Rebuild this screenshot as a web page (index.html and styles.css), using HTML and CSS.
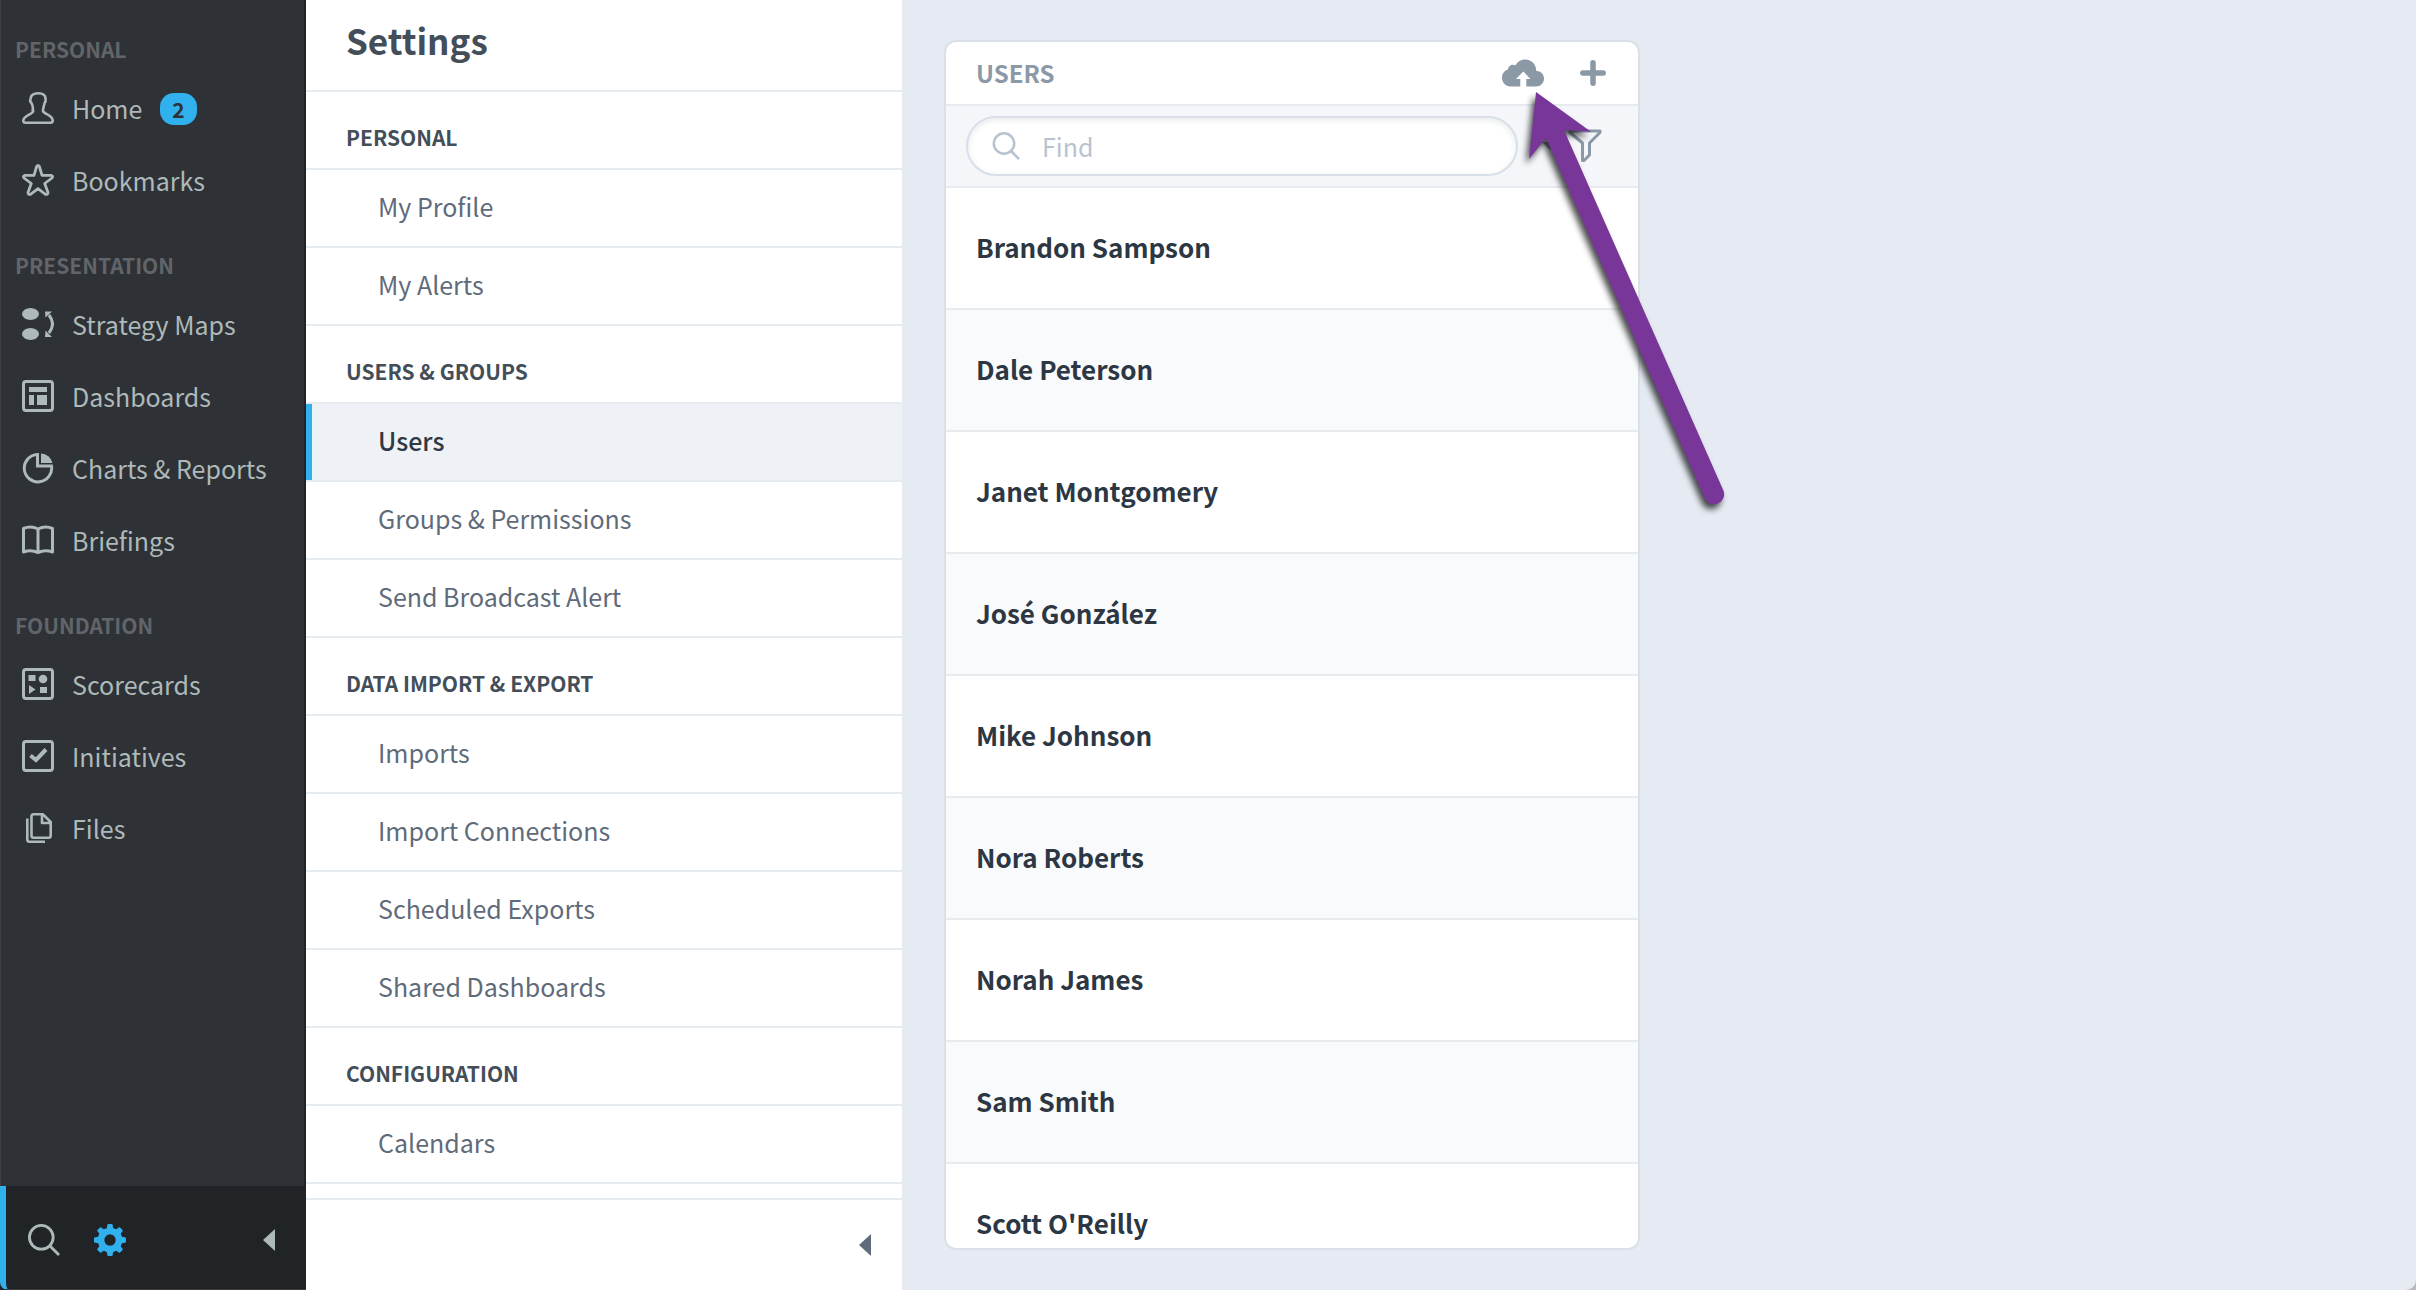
FILE: index.html
```
<!DOCTYPE html>
<html lang="en">
<head>
    <meta charset="UTF-8">
    <meta name="viewport" content="width=device-width, initial-scale=1.0">
    <title>Settings - Users</title>
    <link rel="stylesheet" href="styles.css">
</head>
<body>
<div class="app">

    <aside class="sidebar">
        <nav class="main-nav">
            <h2>Personal</h2>
            <ul>
                <li><a href="#home">
                    <svg class="icon" viewBox="0 0 32 32" fill="none" stroke="currentColor" stroke-width="2.6" stroke-linejoin="round"><path d="M10.500 18.500C11.600 16.500 11 14.500 9.600 11.200C8 10 8 8 8.600 6.500C9 3 12.500 1.300 16.500 1.300C21 1.300 23.800 3.500 23.500 7C24 8.800 23.500 10.200 22.500 11.200C22 14 20.800 16.500 21 19C21.500 22 30.700 22.800 30.700 28.500Q30.700 30.700 28.500 30.700H3.500Q1.300 30.700 1.300 28.500C1.300 23 11 22.500 11.300 19Z"/></svg>
                    Home <span class="badge">2</span></a></li>
                <li><a href="#bookmarks">
                    <svg class="icon" viewBox="0 0 32 32" fill="none" stroke="currentColor" stroke-width="2.8" stroke-linejoin="round"><path d="M14.600 2.500Q16 0.500 17.400 2.500L20 11.300H29Q31.500 12 30 14L22.700 19.500L26 28.500Q26 31 23.500 30.300L16 24.700L8.500 30.300Q6 31 6 28.500L9.300 19.500L2 14Q0.500 12 3 11.300H12Z"/></svg>
                    Bookmarks</a></li>
            </ul>
            <h2>Presentation</h2>
            <ul>
                <li><a href="#maps">
                    <svg class="icon" viewBox="0 0 32 32" fill="currentColor"><ellipse cx="8.500" cy="6" rx="8.500" ry="6"/><ellipse cx="8.500" cy="26" rx="8.500" ry="6"/><path d="M27 7Q34 16 27 25" fill="none" stroke="currentColor" stroke-width="3"/><path d="M23 3.500h7l-6.500 6zM23 29h7l-6.500-6.500z"/></svg>
                    Strategy Maps</a></li>
                <li><a href="#dashboards">
                    <svg class="icon" viewBox="0 0 32 32" fill="currentColor"><rect x="1.500" y="1.500" width="29" height="29" rx="2.500" fill="none" stroke="currentColor" stroke-width="3"/><path d="M7 7h18v5H7zM7 15h5v10H7zM15 15h10v10H15z"/></svg>
                    Dashboards</a></li>
                <li><a href="#charts">
                    <svg class="icon" viewBox="0 0 32 32" fill="none" stroke="currentColor" stroke-width="3"><path d="M15.500 2.500A13.700 13.700 0 1 0 29.500 14H15.500Z"/><path d="M19 1.500A12.500 12.500 0 0 1 30.500 11H19Z" fill="currentColor" stroke="none"/></svg>
                    Charts &amp; Reports</a></li>
                <li><a href="#briefings">
                    <svg class="icon" viewBox="0 0 32 32" fill="none" stroke="currentColor" stroke-width="3" stroke-linejoin="round"><path d="M16 5Q9 1.500 1.500 4.500V28Q9 25.500 16 28.500Q23 25.500 30.500 28V4.500Q23 1.500 16 5ZM16 5V28.500"/></svg>
                    Briefings</a></li>
            </ul>
            <h2>Foundation</h2>
            <ul>
                <li><a href="#scorecards">
                    <svg class="icon" viewBox="0 0 32 32" fill="currentColor"><rect x="1.500" y="1.500" width="29" height="29" rx="2.500" fill="none" stroke="currentColor" stroke-width="3"/><path d="M6.500 7h7v6h-7zM18 19h7v6h-7zM7 17l6.500 4.500L7 26z"/><circle cx="21" cy="11" r="4.300"/></svg>
                    Scorecards</a></li>
                <li><a href="#initiatives">
                    <svg class="icon" viewBox="0 0 32 32" fill="none" stroke="currentColor"><rect x="1.500" y="1.500" width="29" height="29" rx="2.500" stroke-width="3"/><path d="M8.500 15.500L14 20L24 9.500" stroke-width="4"/></svg>
                    Initiatives</a></li>
                <li><a href="#files">
                    <svg class="icon" viewBox="0 0 32 32" fill="none" stroke="currentColor" stroke-width="2.600" stroke-linejoin="round"><path d="M9.500 4.500Q9.500 2.300 11.500 2.300H21L28.700 10V23.500Q28.700 25.700 26.500 25.700H11.500Q9.500 25.700 9.500 23.500ZM20 2.500V11H28.500"/><path d="M5.300 6.500V27.500Q5.300 29.700 7.500 29.700H23"/></svg>
                    Files</a></li>
            </ul>
        </nav>
        <div class="sidebar-footer">
            <button type="button" aria-label="Search">
                <svg class="icon" viewBox="0 0 32 32" fill="none" stroke="currentColor" stroke-width="2.8"><circle cx="13.300" cy="13.300" r="11.900"/><path d="M21.500 21.500L31 31"/></svg>
            </button>
            <button type="button" class="selected" aria-label="Settings">
                <svg class="icon" viewBox="0 0 32 32"><path fill="none" stroke="currentColor" stroke-width="8" d="M16 5a11 11 0 1 0 .01 0z" transform="translate(2.900 2.900) scale(.82)"/><g fill="currentColor"><path id="tooth" d="M12.300 8L13.300 1Q13.500 0 14.500 0H17.500Q18.500 0 18.700 1L19.700 8Z"/><use href="#tooth" transform="rotate(45 16 16)"/><use href="#tooth" transform="rotate(90 16 16)"/><use href="#tooth" transform="rotate(135 16 16)"/><use href="#tooth" transform="rotate(180 16 16)"/><use href="#tooth" transform="rotate(225 16 16)"/><use href="#tooth" transform="rotate(270 16 16)"/><use href="#tooth" transform="rotate(315 16 16)"/></g></svg>
            </button>
            <button type="button" class="collapse" aria-label="Collapse navigation">
                <svg class="caret" viewBox="0 0 12 22" fill="currentColor"><path d="M12 0V22L0 11Z"/></svg>
            </button>
        </div>
    </aside>

    <section class="settings">
        <h1>Settings</h1>
        <nav class="settings-nav">
            <h2>Personal</h2>
            <ul>
                <li><a href="#profile">My Profile</a></li>
                <li><a href="#alerts">My Alerts</a></li>
            </ul>
            <h2>Users &amp; Groups</h2>
            <ul>
                <li><a href="#users" class="active">Users</a></li>
                <li><a href="#groups">Groups &amp; Permissions</a></li>
                <li><a href="#broadcast">Send Broadcast Alert</a></li>
            </ul>
            <h2>Data Import &amp; Export</h2>
            <ul>
                <li><a href="#imports">Imports</a></li>
                <li><a href="#connections">Import Connections</a></li>
                <li><a href="#exports">Scheduled Exports</a></li>
                <li><a href="#shared">Shared Dashboards</a></li>
            </ul>
            <h2>Configuration</h2>
            <ul>
                <li><a href="#calendars">Calendars</a></li>
            </ul>
        </nav>
        <div class="settings-footer">
            <button type="button" aria-label="Collapse settings">
                <svg class="caret" viewBox="0 0 12 22" fill="currentColor"><path d="M12 0V22L0 11Z"/></svg>
            </button>
        </div>
    </section>

    <main class="content">
        <section class="card">
            <header class="card-header">
                <h2>Users</h2>
                <button type="button" aria-label="Import users">
                    <svg class="cloud" viewBox="0 0 42 28" fill="currentColor"><path d="M8.500 27.500C3.500 27.500 0 23.500 0 18.800C0 14.500 2.500 11.500 6 10.500C6 7 10 4.500 13.500 6.200C15.500 2.500 19 .500 23.500 .500C29.500 .500 34.300 5.500 34.300 12C39 12 42 15.500 42 19.500C42 24 38.500 27.500 34 27.500H24.300V20H28.500L21.300 12.500L14 20H18.300V27.500Z"/></svg>
                </button>
                <button type="button" aria-label="Add user">
                    <svg class="plus" viewBox="0 0 26 26" fill="none" stroke="currentColor" stroke-width="5.500" stroke-linecap="round"><path d="M13 2.800V23.200M2.800 13H23.200"/></svg>
                </button>
            </header>
            <div class="toolbar">
                <label class="search">
                    <svg class="search-icon" viewBox="0 0 28 28" fill="none" stroke="currentColor" stroke-width="2.500"><circle cx="12" cy="11.500" r="10.200"/><path d="M19 19L27 27"/></svg>
                    <input type="text" placeholder="Find" aria-label="Find">
                </label>
                <button type="button" class="filter" aria-label="Filter">
                    <svg class="filter-caret" viewBox="0 0 16 8" fill="currentColor"><path d="M0 0H16L8 8Z"/></svg>
                    <svg class="funnel" viewBox="0 0 34 34" fill="none" stroke="currentColor" stroke-width="3" stroke-linejoin="round"><path d="M2 2H32V3.500L21.500 14V26L16 31.500H14.500V14L2 3.500Z"/></svg>
                </button>
            </div>
            <ul class="user-list">
                <li><a href="#u1">Brandon Sampson</a></li>
                <li><a href="#u2">Dale Peterson</a></li>
                <li><a href="#u3">Janet Montgomery</a></li>
                <li><a href="#u4">José González</a></li>
                <li><a href="#u5">Mike Johnson</a></li>
                <li><a href="#u6">Nora Roberts</a></li>
                <li><a href="#u7">Norah James</a></li>
                <li><a href="#u8">Sam Smith</a></li>
                <li><a href="#u9">Scott O'Reilly</a></li>
            </ul>
        </section>
        <!-- pointer to the import button -->
        <svg class="pointer" viewBox="0 0 220 430" fill="#783699"><path d="M16 12L71 51.700L44 50L203.200 410A10 10 0 0 1 185 418.500L26 58L9 79Z"/></svg>
    </main>

</div>
</body>
</html>
```
FILE: styles.css
```
* {
    box-sizing: border-box;
}
body {
    margin: 0;
    background: #b9b9bb;
    font-family: "Noto Sans CJK SC", "Noto Sans", sans-serif;
    font-size: 25px;
    line-height: 36px;
}
ul {
    list-style: none;
    margin: 0;
    padding: 0;
}
h1, h2 {
    margin: 0;
}
a {
    color: inherit;
    text-decoration: none;
}
button {
    display: flex;
    padding: 0;
    border: 0;
    background: none;
    color: inherit;
    cursor: pointer;
}
svg {
    display: block;
    flex: none;
}
.app {
    display: flex;
    height: 100vh;
    overflow: hidden;
    border-bottom-right-radius: 10px;
}
.icon {
    width: 32px;
    height: 32px;
}
.caret {
    width: 12px;
    height: 22px;
}

/* Sidebar */
.sidebar {
    display: flex;
    flex-direction: column;
    flex: 0 0 306px;
    background: #202427;
    color: #aeb9ba;
}
.main-nav {
    flex: 1;
    min-height: 0;
    overflow: hidden;
    margin-right: 2px;
    border-left: 1px solid #3d4145;
    background: #2e3135;
}
.main-nav h2 {
    display: flex;
    align-items: center;
    height: 72px;
    padding: 26px 14px 0;
    color: #616569;
    font-size: 21px;
    font-weight: 700;
    text-transform: uppercase;
}
.main-nav a {
    display: flex;
    align-items: center;
    height: 72px;
    padding: 0 0 1px 21px;
}
.main-nav .icon {
    margin-right: 18px;
}
.badge {
    margin: 3px 0 0 18px;
    padding: 0 12px;
    border-radius: 14px;
    background: #31b0ee;
    color: #2e3135;
    font-size: 21px;
    font-weight: 700;
    line-height: 32px;
}
.sidebar-footer {
    display: flex;
    align-items: center;
    gap: 34px;
    height: 104px;
    padding: 4px 31px 0 22px;
    border-left: 6px solid #31b0ee;
    border-bottom: 1px solid #3b3f42;
    border-bottom-left-radius: 8px;
}
.selected {
    color: #31b0ee;
}
.collapse {
    margin-left: auto;
}

/* Settings menu */
.settings {
    display: flex;
    flex-direction: column;
    flex: 0 0 596px;
    background: #fff;
    color: #5f6b7a;
}
.settings h1 {
    height: 92px;
    padding: 20px 40px 0;
    border-bottom: 2px solid #e6ebf0;
    color: #434e59;
    font-size: 35px;
    font-weight: 700;
    line-height: 40px;
}
.settings-nav {
    flex: 1;
    min-height: 0;
    overflow: hidden;
}
.settings-nav h2 {
    display: flex;
    align-items: center;
    height: 78px;
    padding: 14px 40px 0;
    border-bottom: 2px solid #e6ebf0;
    color: #434e59;
    font-size: 21px;
    font-weight: 700;
    text-transform: uppercase;
}
.settings-nav a {
    display: flex;
    align-items: center;
    height: 78px;
    padding: 0 72px 5px;
    border-bottom: 2px solid #e6ebf0;
}
.settings-nav .active {
    background: linear-gradient(to right, #31b0ee 6px, #eef1f6 6px);
    color: #2f3843;
    font-weight: 500;
}
.settings-footer {
    display: flex;
    justify-content: flex-end;
    align-items: center;
    height: 92px;
    padding-right: 31px;
    border-top: 2px solid #e6ebf0;
}

/* Users */
.content {
    position: relative;
    flex: 1;
    padding: 40px 42px;
    background: #e6ebf3;
}
.card {
    display: flex;
    flex-direction: column;
    width: 696px;
    height: 100%;
    overflow: hidden;
    border: 2px solid #d9e0e8;
    border-radius: 12px;
    background: #fff;
    color: #8b99a7;
}
.card-header {
    display: flex;
    flex: none;
    align-items: center;
    gap: 36px;
    height: 64px;
    padding: 0 32px 0 30px;
    border-bottom: 2px solid #e6ebf0;
}
.card-header h2 {
    flex: 1;
    font-size: 24px;
    font-weight: 700;
    text-transform: uppercase;
}
.cloud {
    width: 42px;
    height: 28px;
}
.plus {
    width: 26px;
    height: 26px;
}
.toolbar {
    display: flex;
    flex: none;
    align-items: center;
    gap: 24px;
    height: 82px;
    padding: 0 36px 0 20px;
    border-bottom: 2px solid #e6ebf0;
    background: #f4f6fa;
}
.search {
    display: flex;
    flex: 1;
    align-items: center;
    gap: 22px;
    height: 60px;
    padding: 0 24px;
    border: 2px solid #d7dfe8;
    border-radius: 30px;
    background: #fff;
    box-shadow: inset 0 2px 6px #e6e9ea;
    color: #b7c3d0;
}
.search-icon {
    width: 28px;
    height: 28px;
}
.search input {
    flex: 1;
    min-width: 0;
    padding: 0;
    border: 0;
    outline: 0;
    background: none;
    color: #2d3743;
    font: inherit;
}
.search input::placeholder {
    color: #b7c3d0;
    opacity: 1;
}
.filter {
    align-items: center;
    gap: 10px;
}
.filter-caret {
    width: 16px;
    height: 8px;
}
.funnel {
    width: 34px;
    height: 34px;
}
.user-list a {
    display: flex;
    align-items: center;
    height: 122px;
    padding: 0 30px 2px;
    border-bottom: 2px solid #e6ebf0;
    color: #2d3743;
    font-size: 26px;
    font-weight: 700;
}
.user-list li:nth-child(even) {
    background: #f9fafc;
}
.pointer {
    position: absolute;
    top: 80px;
    left: 618px;
    width: 220px;
    height: 430px;
    overflow: visible;
    filter: drop-shadow(-3px 5px 3px rgba(0, 0, 0, 0.7));
    pointer-events: none;
}
```
